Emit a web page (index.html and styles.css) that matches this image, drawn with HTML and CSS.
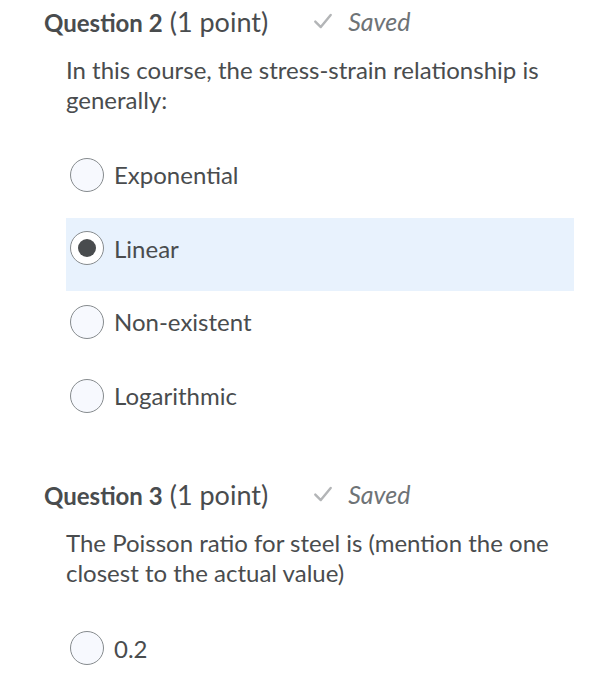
FILE: index.html
```html
<!DOCTYPE html>
<html>
<head>
<meta charset="utf-8">
<link rel="stylesheet" href="styles.css">
</head>
<body>
<div class="page">
  <section class="question">
    <h2 class="q-head"><span class="q-title">Question 2</span> <span class="q-points">(1 point)</span>
      <span class="saved"><svg class="check" viewBox="0 0 20 20" width="22" height="22"><path d="M3 10.5 L8 15.5 L17 4.5" fill="none" stroke="#b3b5b7" stroke-width="2.2" stroke-linecap="round" stroke-linejoin="round"/></svg>Saved</span></h2>
    <p class="prompt">In this course, the stress-strain relationship is generally:</p>
    <div class="options">
      <label class="opt"><span class="radio"></span><span class="opt-text">Exponential</span></label>
      <label class="opt selected"><span class="radio checked"></span><span class="opt-text">Linear</span></label>
      <label class="opt"><span class="radio"></span><span class="opt-text">Non-existent</span></label>
      <label class="opt"><span class="radio"></span><span class="opt-text">Logarithmic</span></label>
    </div>
  </section>
  <section class="question">
    <h2 class="q-head"><span class="q-title">Question 3</span> <span class="q-points">(1 point)</span>
      <span class="saved"><svg class="check" viewBox="0 0 20 20" width="22" height="22"><path d="M3 10.5 L8 15.5 L17 4.5" fill="none" stroke="#b3b5b7" stroke-width="2.2" stroke-linecap="round" stroke-linejoin="round"/></svg>Saved</span></h2>
    <p class="prompt">The Poisson ratio for steel is (mention the one closest to the actual value)</p>
    <div class="options">
      <label class="opt"><span class="radio"></span><span class="opt-text">0.2</span></label>
    </div>
  </section>
</div>
</body>
</html>
```
FILE: styles.css
```css
html, body {
  margin: 0;
  padding: 0;
  background: #ffffff;
}
.page {
  font-family: Lato, "Open Sans", sans-serif;
  color: #494c4e;
  padding: 3px 36px 0 44px;
}
.question {
  margin-bottom: 38px;
}
.q-head {
  margin: 0;
  font-weight: normal;
  display: flex;
  align-items: baseline;
  height: 36px;
  line-height: 36px;
}
.q-title {
  font-weight: bold;
  font-size: 24px;
}
.q-points {
  font-size: 27px;
  margin-left: 7px;
}
.saved {
  margin-left: 44px;
  font-style: italic;
  font-size: 25px;
  color: #6e7376;
  display: inline-flex;
  align-items: center;
}
.check {
  margin-right: 14px;
}
.prompt {
  margin: 16px 0 0 22px;
  font-size: 24px;
  line-height: 30px;
}
.options {
  margin: 29px 0 0 22px;
  display: flex;
  flex-direction: column;
}
.opt {
  display: flex;
  align-items: center;
  height: 73.6px;
  padding: 0 0 12px 4px;
  box-sizing: border-box;
}
.opt.selected {
  background: #e8f2fd;
}
.radio {
  width: 32px;
  height: 32px;
  border: 1px solid #868b8e;
  border-radius: 50%;
  background: #f7f9fe;
  box-sizing: content-box;
  flex: none;
  display: flex;
  align-items: center;
  justify-content: center;
}
.radio.checked {
  background: #ffffff;
}
.radio.checked::after {
  content: "";
  width: 18px;
  height: 18px;
  border-radius: 50%;
  background: #494c4e;
}
.opt-text {
  margin-left: 10px;
  font-size: 24px;
}
```
